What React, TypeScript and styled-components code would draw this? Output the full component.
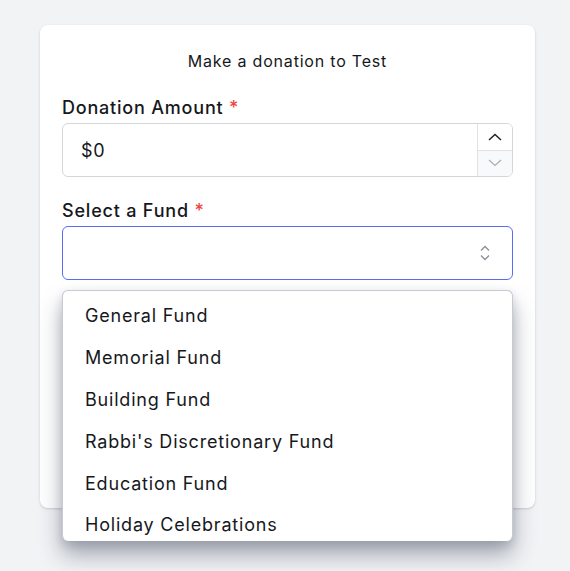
import { createGlobalStyle } from "styled-components";
import styled from "styled-components";

const funds = [
  "General Fund",
  "Memorial Fund",
  "Building Fund",
  "Rabbi's Discretionary Fund",
  "Education Fund",
  "Holiday Celebrations",
];

const App = () => {
  return (
    <>
      <GlobalStyle />
      <Page>
        <Card>
          <Title>Make a donation to Test</Title>
          <Field>
            <Label>
              Donation Amount <Req>*</Req>
            </Label>
            <InputBox>
              <AmountText>$0</AmountText>
              <Stepper>
                <StepBtn $dim={false}>
                  <svg width="14" height="8" viewBox="0 0 14 8" fill="none">
                    <path d="M1 7L7 1.5L13 7" stroke="#1f2328" strokeWidth="1.5" />
                  </svg>
                </StepBtn>
                <StepBtn $dim={true}>
                  <svg width="14" height="8" viewBox="0 0 14 8" fill="none">
                    <path d="M1 1L7 6.5L13 1" stroke="#a8adb5" strokeWidth="1.2" />
                  </svg>
                </StepBtn>
              </Stepper>
            </InputBox>
          </Field>
          <Field>
            <Label>
              Select a Fund <Req>*</Req>
            </Label>
            <SelectWrap>
              <SelectBox>
                <svg width="12" height="18" viewBox="0 0 12 18" fill="none">
                  <path d="M2 6.5L6 2.5L10 6.5" stroke="#8a9099" strokeWidth="1.3" />
                  <path d="M2 11.5L6 15.5L10 11.5" stroke="#8a9099" strokeWidth="1.3" />
                </svg>
              </SelectBox>
              <Menu>
                {funds.map((f) => (
                  <Option key={f}>{f}</Option>
                ))}
              </Menu>
            </SelectWrap>
          </Field>
        </Card>
      </Page>
    </>
  );
};

export default App;

/* ===== styled-components ===== */

const GlobalStyle = createGlobalStyle`
  body {
    margin: 0;
    background: #f1f3f5;
    font-family: Inter, "Noto Sans", sans-serif;
    color: #16181c;
    letter-spacing: 0.05em;
  }
`;

const Page = styled.div`
  padding: 25px 35px 0 40px;
  height: 571px;
  box-sizing: border-box;
  overflow: hidden;
`;

const Card = styled.div`
  width: 495px;
  min-height: 483px;
  box-sizing: border-box;
  background: #ffffff;
  border-radius: 8px;
  box-shadow: 0 1px 3px rgba(20, 30, 50, 0.12), 0 1px 2px rgba(20, 30, 50, 0.06);
  padding: 24px 22px 0 22px;
  display: flex;
  flex-direction: column;
  gap: 20px;
`;

const Title = styled.div`
  text-align: center;
  font-size: 16px;
  line-height: 24px;
  margin-bottom: 1px;
`;

const Field = styled.div`
  display: flex;
  flex-direction: column;
  gap: 2px;
`;

const Label = styled.div`
  font-size: 18px;
  line-height: 27px;
  font-weight: 500;
`;

const Req = styled.span`
  color: #ef4444;
`;

const InputBox = styled.div`
  height: 54px;
  box-sizing: border-box;
  border: 1px solid #d3d6db;
  border-radius: 6px;
  display: flex;
  align-items: stretch;
  overflow: hidden;
`;

const AmountText = styled.div`
  flex: 1;
  display: flex;
  align-items: center;
  padding-left: 18px;
  font-size: 18px;
`;

const Stepper = styled.div`
  width: 34px;
  display: flex;
  flex-direction: column;
  border-left: 1px solid #dfe2e6;
`;

const StepBtn = styled.div<{ $dim: boolean }>`
  flex: 1;
  display: flex;
  align-items: center;
  justify-content: center;
  background: ${({ $dim }) => ($dim ? "#f8f9fa" : "#ffffff")};
  border-top: ${({ $dim }) => ($dim ? "1px solid #dfe2e6" : "none")};
`;

const SelectWrap = styled.div`
  position: relative;
`;

const SelectBox = styled.div`
  height: 54px;
  box-sizing: border-box;
  border: 1px solid #5b6cf2;
  border-radius: 6px;
  display: flex;
  align-items: center;
  justify-content: flex-end;
  padding-right: 21px;
`;

const Menu = styled.div`
  position: absolute;
  top: 64px;
  left: 0;
  right: 0;
  max-height: 251px;
  overflow: hidden;
  box-sizing: border-box;
  background: #ffffff;
  border: 1px solid #c6cad1;
  border-bottom: none;
  border-radius: 6px;
  padding-top: 4px;
  box-shadow: 0 14px 22px rgba(40, 48, 70, 0.38), 0 4px 10px rgba(40, 48, 70, 0.15);
`;

const Option = styled.div`
  height: 41.8px;
  display: flex;
  align-items: center;
  padding-left: 22px;
  font-size: 18px;
`;
